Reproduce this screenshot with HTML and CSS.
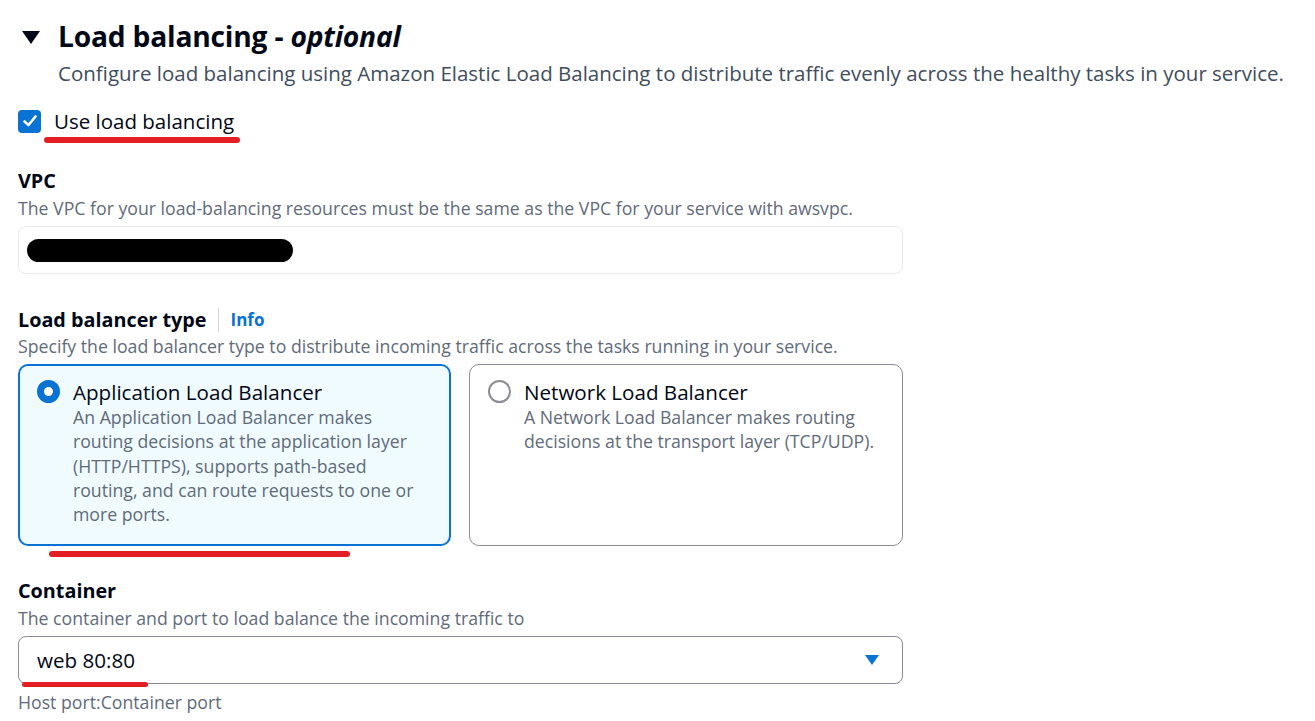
FILE: index.html
```html
<!DOCTYPE html>
<html>
<head>
<meta charset="utf-8">
<link rel="stylesheet" href="styles.css">
</head>
<body>
<div class="page">
  <div class="header">
    <svg class="caret" width="20" height="15" viewBox="0 0 20 15"><path d="M1 1 H19 L10 14 Z" fill="#000716"/></svg>
    <h2 class="title">Load balancing - <i>optional</i></h2>
  </div>
  <p class="intro">Configure load balancing using Amazon Elastic Load Balancing to distribute traffic evenly across the healthy tasks in your service.</p>

  <label class="check-row">
    <span class="checkbox"><svg width="16" height="14" viewBox="0 0 16 14"><path d="M2.5 7.5 L6.5 11 L13.5 2.5" fill="none" stroke="#fff" stroke-width="2.6" stroke-linecap="round" stroke-linejoin="round"/></svg></span>
    <span class="check-label annotated">Use load balancing<span class="mark mark-check"></span></span>
  </label>

  <div class="field field-vpc">
    <div class="label">VPC</div>
    <div class="desc">The VPC for your load-balancing resources must be the same as the VPC for your service with awsvpc.</div>
    <div class="input input-disabled"><span class="redact"></span></div>
  </div>

  <div class="field field-type">
    <div class="label">Load balancer type <span class="sep"></span><a class="info">Info</a></div>
    <div class="desc desc-tight">Specify the load balancer type to distribute incoming traffic across the tasks running in your service.</div>
    <div class="cards">
      <div class="card card-selected">
        <span class="radio radio-on"></span>
        <div class="card-body">
          <div class="card-title">Application Load Balancer</div>
          <div class="card-desc">An Application Load Balancer makes routing decisions at the application layer (HTTP/HTTPS), supports path-based routing, and can route requests to one or more ports.</div>
        </div>
        <span class="mark mark-card"></span>
      </div>
      <div class="card">
        <span class="radio"></span>
        <div class="card-body">
          <div class="card-title">Network Load Balancer</div>
          <div class="card-desc">A Network Load Balancer makes routing decisions at the transport layer (TCP/UDP).</div>
        </div>
      </div>
    </div>
  </div>

  <div class="field field-container">
    <div class="label">Container</div>
    <div class="desc">The container and port to load balance the incoming traffic to</div>
    <div class="input select">
      <span class="select-value">web 80:80</span>
      <svg class="select-caret" width="16" height="12" viewBox="0 0 16 12"><path d="M1 1 H15 L8 11 Z" fill="#0972d3"/></svg>
      <span class="mark mark-select"></span>
    </div>
    <div class="hint">Host port:Container port</div>
  </div>
</div>
</body>
</html>
```

FILE: styles.css
```css
* { box-sizing: border-box; }
html, body { margin: 0; padding: 0; background: #fff; }
body {
  font-family: "Open Sans", "Noto Sans", "Liberation Sans", sans-serif;
  color: #000716;
  width: 1315px;
  height: 721px;
  overflow: hidden;
}
.page { padding: 16px 0 0 18px; }

.header { display: flex; align-items: center; height: 40px; }
.caret { margin-left: 3px; margin-right: 17px; margin-top: 2px; }
.title { margin: 0; font-size: 28.2px; font-weight: 700; line-height: 40px; letter-spacing: -0.2px; }
.title i { font-weight: 700; }

.intro { margin: 4px 0 0 40px; font-size: 20.5px; line-height: 26px; color: #414d5c; white-space: nowrap; }

.check-row { display: flex; align-items: center; margin-top: 23px; height: 24px; gap: 13px; }
.checkbox {
  width: 23px; height: 23px; border-radius: 4px; background: #0972d3;
  display: flex; align-items: center; justify-content: center;
}
.check-label { font-size: 20.5px; line-height: 24px; position: relative; }

.annotated { position: relative; }
.mark { position: absolute; height: 6px; border-radius: 3px; background: #e31e24; }
.mark-check { left: -10px; right: -6px; top: 28px; }

.field-vpc { margin-top: 35px; }
.field-type { margin-top: 33px; }
.field-container { margin-top: 32px; }

.label { font-size: 19.8px; font-weight: 700; line-height: 26px; display: flex; align-items: center; }
.sep { display: inline-block; width: 1px; height: 24px; background: #d1d5db; margin: 0 12px 0 11px; }
.info { color: #0972d3; font-size: 17px; font-weight: 700; }
.desc { margin-top: 2px; font-size: 17.7px; line-height: 24px; color: #5f6b7a; white-space: nowrap; }
.desc-tight { margin-top: 1px; }

.input {
  margin-top: 6px; width: 885px; height: 48px; border-radius: 8px;
  display: flex; align-items: center; position: relative;
}
.input-disabled { border: 1px solid #e9ebed; background: #fff; padding-left: 8px; }
.redact { width: 266px; height: 23px; border-radius: 12px; background: #000; }

.cards { margin-top: 6px; display: flex; gap: 18px; }
.card {
  position: relative; width: 434px; height: 182px; border: 1px solid #8c8c94; border-radius: 10px;
  display: flex; align-items: flex-start; gap: 13px; padding: 14px 18px 0 18px;
}
.card-selected { width: 433px; border: 2px solid #0972d3; background: #f0fbff; padding: 13px 17px 0 17px; }
.radio {
  flex: none; width: 23px; height: 23px; border-radius: 50%; border: 2px solid #8c8c94; margin-top: 1px; background: #fff;
}
.radio-on { border: 7px solid #0972d3; }
.card-title { font-size: 20.6px; line-height: 26px; color: #000716; }
.card-desc { font-size: 17.7px; line-height: 24.3px; color: #5f6b7a; }
.mark-card { left: 29px; width: 301px; bottom: -13px; }

.select { border: 1px solid #8c8c94; padding: 0 22px 0 18px; justify-content: space-between; }
.select-value { font-size: 20.6px; color: #000716; }
.mark-select { left: 3px; width: 126px; bottom: -4px; height: 5px; }
.hint { margin-top: 6px; font-size: 17.7px; line-height: 24px; color: #5f6b7a; }
```
